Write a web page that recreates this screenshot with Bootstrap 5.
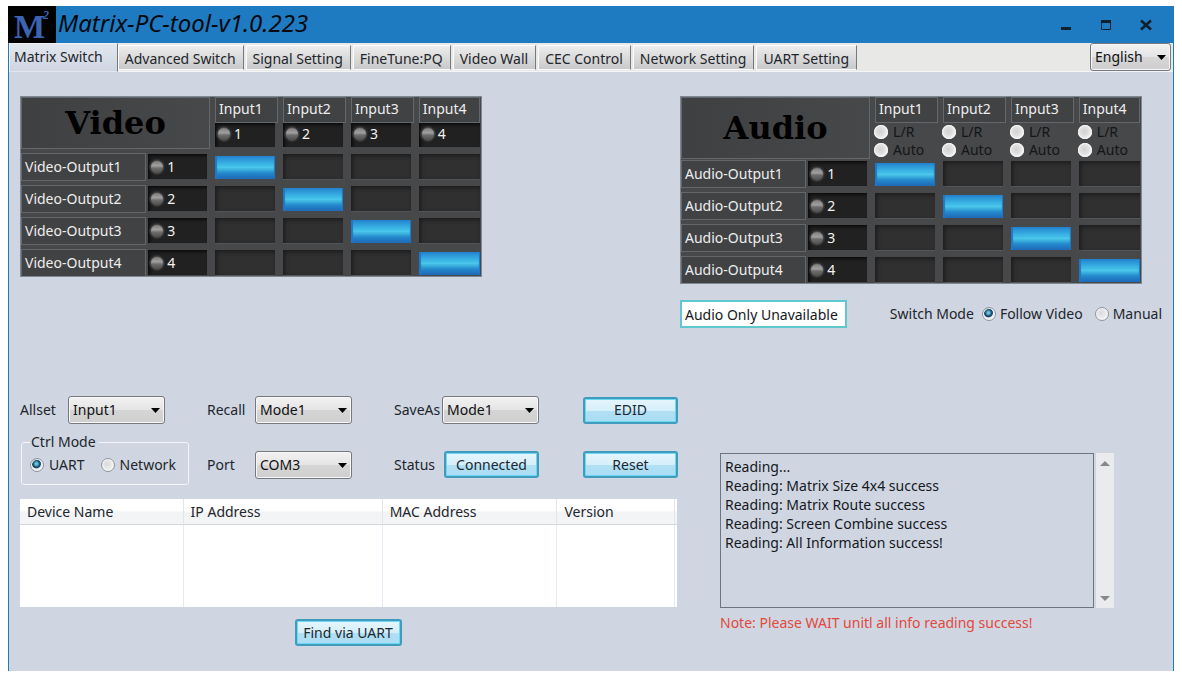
<!DOCTYPE html>
<html lang="en">
<head>
<meta charset="utf-8">
<meta name="viewport" content="width=device-width, initial-scale=1">
<title>Matrix-PC-tool</title>
<link href="https://cdn.jsdelivr.net/npm/bootstrap@5.3.0/dist/css/bootstrap.min.css" rel="stylesheet">
<style>
  :root { --ui: "Noto Sans", "Open Sans", sans-serif; --pane: #cfd6e2; --ink: #22252b; }
  body { font-family: var(--ui); font-size: 14px; line-height: 20px; color: var(--ink); background: #fff; padding: 6px 8px; }
  button, select, input, textarea { font: inherit; color: inherit; }
  .app-window { min-height: calc(100vh - 12px); background: var(--pane); border: 1px solid #1f7bbf; border-width: 0 1px; }

  /* title bar */
  .title-bar { background: #1f7bc1; height: 37px; margin: 0 -1px; }
  .app-logo { width: 48px; height: 37px; overflow: visible; }
  .app-title { font-size: 24px; line-height: 34px; font-style: italic; font-weight: 400; color: #05090f; margin-left: 2px; }
  .win-btn { border: 0; background: none; padding: 0; width: 40px; height: 37px; }
  .win-btn svg { display: block; margin: 0 auto; }

  /* tab strip */
  .tab-strip { background: #e8e8e7; height: 29px; border-bottom: 1px solid #f4f5f7; }
  .tab-strip .nav-link { color: var(--ink); font-size: 14px; line-height: 20px; padding: 3px 7px 1px 6px; margin-top: 2px; height: 25px;
    border: 1px solid #fbfbfb; border-right: 1px solid #77797c; border-radius: 0; background: linear-gradient(#ededed, #d9d9d9 55%, #c8c9cb); margin-right: 2px; white-space: nowrap; }
  .tab-strip .nav-link.active { background: linear-gradient(#e2e6ed, var(--pane)); color: var(--ink); margin: 0; height: 29px; padding: 3px 14px 0 4px; border-color: #eef0f4 #77797c transparent #eef0f4; }

  /* drop-downs */
  .combo { appearance: none; border: 1px solid #75787d; border-radius: 3px; height: 28px; width: 97px; padding: 0 20px 0 4px; color: #111;
    background: url("data:image/svg+xml,%3Csvg xmlns='http://www.w3.org/2000/svg' width='9' height='5'%3E%3Cpath d='M0 0h9L4.500 5z' fill='%23000'/%3E%3C/svg%3E") no-repeat right 4px center, linear-gradient(#f2f2f2, #e4e4e4 50%, #d5d5d5 51%, #cfcfcf); box-shadow: inset 0 0 0 1px #f7f7f7; }
  .combo-lang { width: 81px; margin-right: 2px; }

  /* glossy buttons */
  .gloss { border: 2px solid #3f9cbd; border-radius: 3px; height: 27px; padding: 0; line-height: 20px; color: #1c2830;
    background: linear-gradient(#e6f5fc, #d5effa 50%, #b2e0f4 51%, #a9dcf3); box-shadow: inset 0 0 0 1px #6fd6f3; }

  /* radio buttons */
  .dot { appearance: none; width: 14px; height: 14px; border-radius: 50%; border: 1px solid #8f959d; margin: 0; flex: none;
    background: radial-gradient(circle at 40% 40%, #d8dade, #f4f4f4 75%); box-shadow: inset 0 0 0 1px #f5f5f5; }
  .dot:checked { background: radial-gradient(circle at 45% 40%, #6fc3dc 0 1px, #1c5e84 3px, #123c5a 4px, #e9edf0 5px); }
  .dot-white { border: 0; background: radial-gradient(circle at 45% 45%, #d2d2d2, #e2e2e2 45%, #fafafa 70%); }
  .dot-led { border: 1px solid #4a4a4a; background: linear-gradient(#7c7c7c, #a0a0a0 40%, #6c6c6c 60%, #505050); box-shadow: 0 0 1px 1px #333; }

  /* routing matrices */
  .matrix { width: 100%; max-width: 462px; table-layout: fixed; border-collapse: separate; border-spacing: 0; background: #47484a; outline: 1px solid #7f8792; outline-offset: -1px; color: #eee; }
  .matrix th, .matrix td { padding: 0 6px 0 2px; vertical-align: top; font-weight: 400; height: 32px; line-height: 20px; }
  .matrix tr > :last-child { padding-right: 2px; }
  .matrix thead th, .matrix thead td { height: 27px; }
  .matrix tbody tr:last-child > * { height: 28px; }
  .matrix thead th.caption-cell { padding: 1px 3px 4px 1px; }
  .matrix .row-name { padding: 0 0 0 1px; }
  .caption-box { border: 1px solid #64686c; color: #000; font: bold 32px/50px "DejaVu Serif", "Liberation Serif", serif; background: linear-gradient(90deg, #3f4042, #474849); text-align: center; }
  .head-box { border: 1px solid #64686c; height: 26px; line-height: 22px; margin: 1px -3px 0 0; padding-left: 3px; background: #414244; }
  .matrix tr > :last-child .head-box { margin-right: 0; }
  .row-box { border: 1px solid #64686c; height: 28px; line-height: 26px; padding-left: 3px; background: #414244; white-space: nowrap; overflow: hidden; }
  .well { height: 25px; margin-top: 1px; background: #212121; box-shadow: inset 2px 2px 3px #0d0d0d; padding-left: 2px; color: #f2f2f2; }
  .well.d-flex { gap: 3px; }
  .led-row .well { height: 24px; margin-top: 0; line-height: 18px; padding-bottom: 2px; }
  .cross { display: block; width: 100%; height: 25px; margin-top: 1px; border: 0; padding: 0; background: #303030; box-shadow: inset 2px 2px 4px #1c1c1c, 0 1px 0 #545557; }
  .cross.on { height: 23px; margin-top: 3px; background: linear-gradient(#2382cf, #36aee2 30%, #49c6e9 50%, #2388cc 75%, #1f67b5); box-shadow: inset 2px 0 1px #1f78c8, inset -1px 0 1px #1f78c8; }
  .video-matrix .led-row td { height: 30px; }
  .audio-matrix .led-row td { height: 37px; color: #141516; line-height: 18px; padding: 0; }
  .audio-matrix .caption-box { line-height: 60px; }
  .audio-matrix thead th.caption-cell { padding-bottom: 1px; }
  .mini-gap { gap: 5px; padding-left: 1px; }

  /* page body */
  .work-area { display: grid; grid-template-columns: 660fr 482fr; row-gap: 68px; padding: 24px 11px; }
  .avail { width: 167px; height: 28px; border: 2px solid #5fc8cf; background: #fff; padding: 0 3px; color: #15181c; }
  .control-grid { display: grid; grid-template-columns: 187fr 187fr 189fr 97fr; row-gap: 8px; }
  .field-name { width: 48px; flex: none; }
  .status-name { width: 50px; }
  .control-grid .gloss { width: 95px; }
  .control-grid > .second { padding-top: 19px; height: 61px; }
  .mode-box { border: 1px solid #f2f5f9; border-radius: 3px; margin: 0 0 0 1px; padding: 3px 8px 0; width: 168px; height: 53px; min-width: 0; }
  .mode-box legend { float: none; width: auto; margin: 0; padding: 0 3px 0 1px; font-size: 14px; line-height: 20px; }
  .mode-box label { gap: 5px; }
  .devices { table-layout: fixed; width: calc(100% - 3px); background: #fff; border-collapse: separate; border-spacing: 0; margin-top: 6px; }
  .devices th { font-weight: 400; height: 26px; padding: 0 7px; line-height: 25px; background: linear-gradient(#fff 45%, #f2f3f5 55%, #f4f5f6); border-right: 1px solid #e2e5ea; border-bottom: 1px solid #d3d6da; }
  .devices td { height: 82px; border-right: 1px solid #e3ebf2; }
  .find-row { padding-right: 4px; }
  .find-btn { width: 107px; margin-top: 12px; }
  .log-side { padding: 57px 48px 0 40px; }
  .log-box { height: 155px; border: 1px solid #6d7580; background: var(--pane); resize: none; padding: 3px 4px; line-height: 19px; overflow: hidden; color: #15181c; min-width: 0; }
  .log-scroll { width: 18px; background: #e9ebec; margin-left: 2px; flex: none; }
  .log-scroll button { border: 0; background: none; padding: 0; height: 20px; line-height: 0; }
  .note { color: #e2483c; margin-top: 5px; }
</style>
</head>
<body>
<div class="app-window">
  <header class="title-bar d-flex">
    <svg class="app-logo flex-shrink-0" viewBox="0 0 48 37" role="img" aria-label="M2">
      <rect width="48" height="37" fill="#020203"/>
      <g fill="#3c63b4" font-family="'Liberation Serif', serif" font-weight="bold">
        <text x="6" y="32" font-size="33">M</text>
        <text x="35" y="13" font-size="12" font-style="italic">2</text>
      </g>
    </svg>
    <h1 class="app-title mb-0">Matrix-PC-tool-v1.0.223</h1>
    <div class="ms-auto d-flex pe-2">
      <button class="win-btn" aria-label="Minimize"><svg width="12" height="12" viewBox="0 0 12 12"><path d="M1 8h10v3H1z" fill="#10202c"/></svg></button>
      <button class="win-btn" aria-label="Maximize"><svg width="12" height="12" viewBox="0 0 12 12"><path d="M1.500 1.500h9v9h-9z" fill="none" stroke="#10202c"/><path d="M1 1h10v3H1z" fill="#10202c"/></svg></button>
      <button class="win-btn" aria-label="Close"><svg width="12" height="12" viewBox="0 0 12 12"><path d="M1 1.500l10 9M11 1.500l-10 9" stroke="#10202c" stroke-width="2.600"/></svg></button>
    </div>
  </header>

  <div class="tab-strip d-flex">
    <nav class="nav flex-nowrap" aria-label="Pages">
      <a class="nav-link active" href="#">Matrix Switch</a>
      <a class="nav-link" href="#">Advanced Switch</a>
      <a class="nav-link" href="#">Signal Setting</a>
      <a class="nav-link" href="#">FineTune:PQ</a>
      <a class="nav-link" href="#">Video Wall</a>
      <a class="nav-link" href="#">CEC Control</a>
      <a class="nav-link" href="#">Network Setting</a>
      <a class="nav-link" href="#">UART Setting</a>
    </nav>
    <select class="combo combo-lang ms-auto" aria-label="Language"><option>English</option></select>
  </div>

  <main class="work-area">
    <section>
      <table class="matrix video-matrix">
        <colgroup><col style="width:27.3%"><col style="width:14.5%"><col style="width:14.7%"><col style="width:14.7%"><col style="width:14.7%"><col></colgroup>
        <thead>
          <tr><th class="caption-cell" colspan="2" rowspan="2"><div class="caption-box">Video</div></th>
            <th><div class="head-box">Input1</div></th><th><div class="head-box">Input2</div></th><th><div class="head-box">Input3</div></th><th><div class="head-box">Input4</div></th></tr>
          <tr class="led-row">
            <td><label class="well d-flex align-items-center"><input type="radio" class="dot dot-led" name="vin1">1</label></td>
            <td><label class="well d-flex align-items-center"><input type="radio" class="dot dot-led" name="vin2">2</label></td>
            <td><label class="well d-flex align-items-center"><input type="radio" class="dot dot-led" name="vin3">3</label></td>
            <td><label class="well d-flex align-items-center"><input type="radio" class="dot dot-led" name="vin4">4</label></td></tr>
        </thead>
        <tbody id="video-rows"></tbody>
      </table>
    </section>

    <section>
      <table class="matrix audio-matrix">
        <colgroup><col style="width:27.3%"><col style="width:14.5%"><col style="width:14.7%"><col style="width:14.7%"><col style="width:14.7%"><col></colgroup>
        <thead>
          <tr><th class="caption-cell" colspan="2" rowspan="2"><div class="caption-box">Audio</div></th>
            <th><div class="head-box">Input1</div></th><th><div class="head-box">Input2</div></th><th><div class="head-box">Input3</div></th><th><div class="head-box">Input4</div></th></tr>
          <tr class="led-row" id="audio-modes"></tr>
        </thead>
        <tbody id="audio-rows"></tbody>
      </table>
      <div class="d-flex align-items-center justify-content-between mt-3">
        <input class="avail" type="text" readonly value="Audio Only Unavailable" aria-label="Audio status">
        <div class="d-flex align-items-center" role="radiogroup" aria-label="Switch Mode">
          <span>Switch Mode</span>
          <label class="d-flex align-items-center gap-1 mx-2"><input class="dot" type="radio" name="switch" checked>Follow Video</label>
          <label class="d-flex align-items-center gap-1 ms-1"><input class="dot" type="radio" name="switch">Manual</label>
        </div>
      </div>
    </section>

    <section>
      <div class="control-grid">
        <div class="d-flex align-items-center"><label class="field-name" for="allset">Allset</label><select class="combo" id="allset"><option>Input1</option></select></div>
        <div class="d-flex align-items-center"><label class="field-name" for="recall">Recall</label><select class="combo" id="recall"><option>Mode1</option></select></div>
        <div class="d-flex align-items-center"><label class="field-name" for="saveas">SaveAs</label><select class="combo" id="saveas"><option>Mode1</option></select></div>
        <div class="d-flex align-items-center"><button class="gloss">EDID</button></div>
        <fieldset class="mode-box"><legend>Ctrl Mode</legend>
          <div class="d-flex gap-3">
            <label class="d-flex align-items-center"><input class="dot" type="radio" name="ctrl" checked>UART</label>
            <label class="d-flex align-items-center"><input class="dot" type="radio" name="ctrl">Network</label>
          </div>
        </fieldset>
        <div class="second d-flex align-items-start"><label class="field-name pt-1" for="port">Port</label><select class="combo" id="port"><option>COM3</option></select></div>
        <div class="second d-flex align-items-start"><span class="field-name status-name pt-1">Status</span><button class="gloss">Connected</button></div>
        <div class="second d-flex align-items-start"><button class="gloss">Reset</button></div>
      </div>
      <table class="devices">
        <colgroup><col style="width:24.9%"><col style="width:30.3%"><col style="width:26.600%"><col style="width:17.900%"><col></colgroup>
        <thead><tr><th>Device Name</th><th>IP Address</th><th>MAC Address</th><th>Version</th><th class="p-0 border-end-0"></th></tr></thead>
        <tbody><tr><td></td><td></td><td></td><td></td><td class="p-0 border-end-0"></td></tr></tbody>
      </table>
      <div class="find-row text-center"><button class="gloss find-btn">Find via UART</button></div>
    </section>

    <section class="log-side">
      <div class="d-flex">
        <textarea class="log-box flex-grow-1" readonly aria-label="Log">Reading...
Reading: Matrix Size 4x4 success
Reading: Matrix Route success
Reading: Screen Combine success
Reading: All Information success!</textarea>
        <div class="log-scroll d-flex flex-column justify-content-between">
          <button aria-label="Scroll up"><svg width="10" height="5"><path d="M0 5h10L5 0z" fill="#85888c"/></svg></button>
          <button aria-label="Scroll down"><svg width="10" height="5"><path d="M0 0h10L5 5z" fill="#85888c"/></svg></button>
        </div>
      </div>
      <p class="note mb-0">Note: Please WAIT unitl all info reading success!</p>
    </section>
  </main>
</div>
<script src="https://cdn.jsdelivr.net/npm/bootstrap@5.3.0/dist/js/bootstrap.bundle.min.js"></script>
<script>
  // Each output is routed to the input of the same number.
  const ports = [1, 2, 3, 4];
  for (const kind of ["Video", "Audio"]) {
    document.getElementById(kind.toLowerCase() + "-rows").innerHTML = ports.map(out =>
      `<tr><th class="row-name"><div class="row-box">${kind}-Output${out}</div></th>
       <td><label class="well d-flex align-items-center"><input type="radio" class="dot dot-led" name="${kind}out${out}">${out}</label></td>` +
      ports.map(inp => `<td><button class="cross${inp === out ? " on" : ""}" aria-label="${kind} output ${out}, input ${inp}"></button></td>`).join("") + "</tr>").join("");
  }
  document.getElementById("audio-modes").innerHTML = ports.map(n =>
    `<td>${["L/R", "Auto"].map(m => `<label class="d-flex align-items-center mini-gap"><input type="radio" class="dot dot-white" name="ain${n}">${m}</label>`).join("")}</td>`).join("");
</script>
</body>
</html>
